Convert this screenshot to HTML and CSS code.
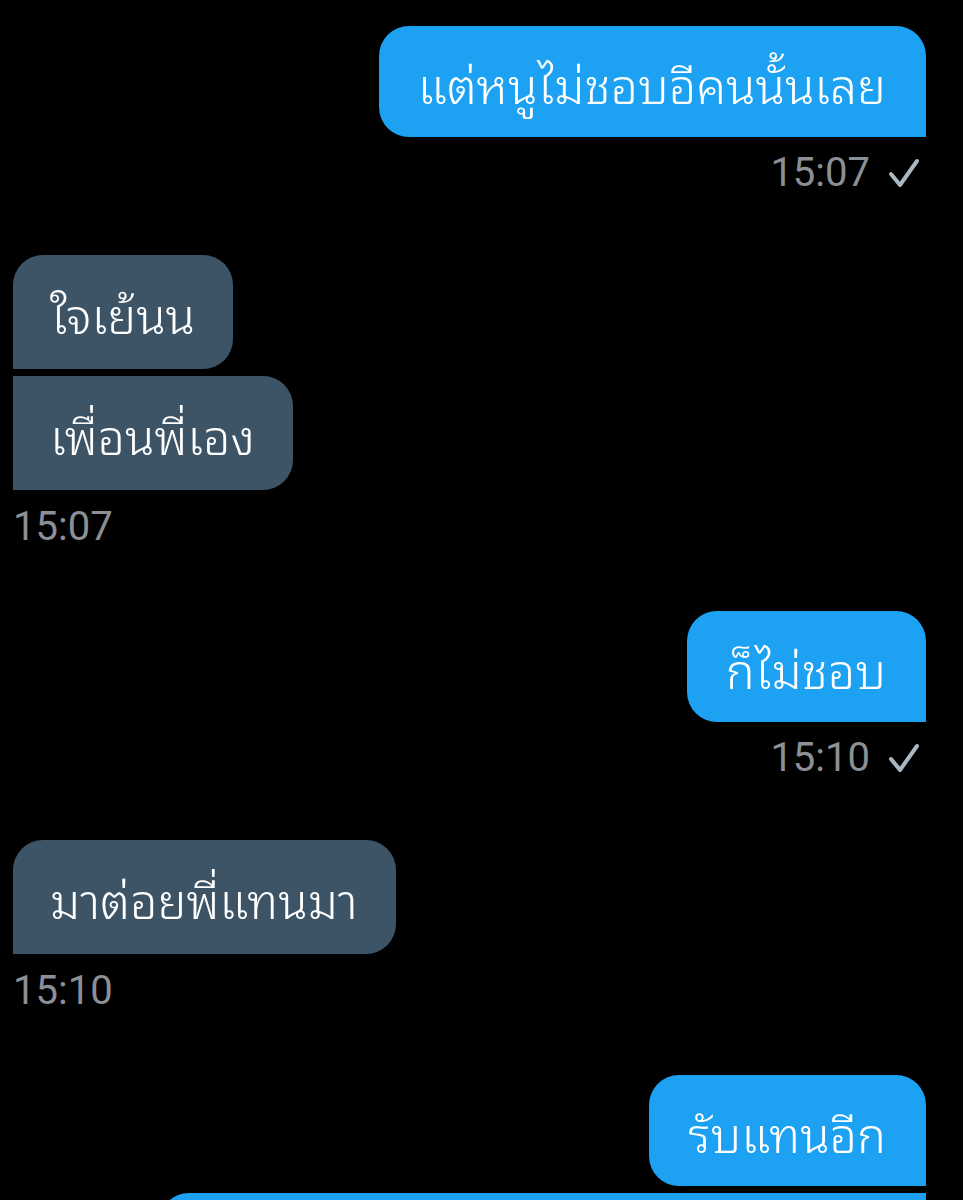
FILE: index.html
```html
<!DOCTYPE html>
<html lang="th">
<head>
<meta charset="utf-8">
<title>Chat</title>
<link rel="stylesheet" href="styles.css">
</head>
<body>
<div class="chat">
  <div class="group out">
    <div class="bubble out-single">แต่หนูไม่ชอบอีคนนั้นเลย</div>
    <div class="meta"><span class="time">15:07</span><svg class="check" width="32" height="32" viewBox="0 0 32 32"><path d="M3 17 L12 28 L29 4" fill="none" stroke="#aab8c2" stroke-width="4" stroke-linecap="round" stroke-linejoin="round"/></svg></div>
  </div>
  <div class="group in">
    <div class="bubble in-first">ใจเย้นน</div>
    <div class="bubble in-last">เพื่อนพี่เอง</div>
    <div class="meta"><span class="time">15:07</span></div>
  </div>
  <div class="group out">
    <div class="bubble out-single">ก็ไม่ชอบ</div>
    <div class="meta"><span class="time">15:10</span><svg class="check" width="32" height="32" viewBox="0 0 32 32"><path d="M3 17 L12 28 L29 4" fill="none" stroke="#aab8c2" stroke-width="4" stroke-linecap="round" stroke-linejoin="round"/></svg></div>
  </div>
  <div class="group in">
    <div class="bubble in-single">มาต่อยพี่แทนมา</div>
    <div class="meta"><span class="time">15:10</span></div>
  </div>
  <div class="group out">
    <div class="bubble out-first">รับแทนอีก</div>
    <div class="bubble out-next">&nbsp;</div>
  </div>
</div>
</body>
</html>
```

FILE: styles.css
```css
html, body {
  margin: 0;
  padding: 0;
  background: #000;
}
body {
  width: 963px;
  height: 1200px;
  overflow: hidden;
  font-family: "Noto Sans Thai Looped", "Noto Sans Thai", "Noto Sans", Roboto, sans-serif;
}
.chat {
  display: flex;
  flex-direction: column;
  gap: 58px;
  padding: 26px 37px 0 13px;
}
.group {
  display: flex;
  flex-direction: column;
  gap: 7px;
}
.group.out { align-items: flex-end; }
.group.in {
  align-items: flex-start;
  margin-bottom: 2px;
}
.bubble {
  color: #fff;
  font-size: 48.5px;
  font-weight: 350;
  line-height: 56px;
  white-space: nowrap;
}
.out .bubble {
  background: #1da1f2;
  padding: 28px 40px 27px 39px;
}
.in .bubble {
  background: #3d5466;
  padding: 29px 38px 29px 37px;
}
.out-single, .out-first { border-radius: 30px 30px 0 30px; }
.out-next { border-radius: 30px 0 0 0; width: 688px; }
.in-single { border-radius: 30px 30px 30px 0; }
.in-first { border-radius: 30px 30px 30px 0; }
.in-last { border-radius: 0 30px 30px 0; }
.meta {
  display: flex;
  align-items: center;
  gap: 18px;
  margin-top: 5px;
  height: 48px;
}
.in .meta { margin-top: 6px; }
.out .meta { padding-right: 6px; }
.time {
  font-family: Roboto, "Liberation Sans", sans-serif;
  font-size: 40px;
  line-height: 48px;
  color: #8a9095;
}
.check { display: block; }
```
